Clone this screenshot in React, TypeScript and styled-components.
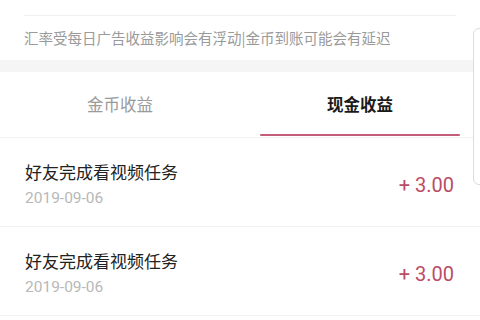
import React from 'react';
import styled, { createGlobalStyle } from 'styled-components';

const GlobalStyle = createGlobalStyle`
  html, body {
    margin: 0;
    padding: 0;
    background: #ffffff;
  }
  body {
    font-family: "Noto Sans CJK SC", "Noto Sans", sans-serif;
  }
`;

const Page = styled.div`
  position: relative;
  width: 480px;
  height: 320px;
  overflow: hidden;
  background: #ffffff;
`;

const NoticeBox = styled.div`
  margin-top: 15px;
  padding: 0 24px;
`;

const Notice = styled.div`
  border-top: 1px solid #f0f0f0;
  height: 44px;
  line-height: 44px;
  font-size: 14.5px;
  color: #9a9a9a;
  white-space: nowrap;
`;

const Band = styled.div`
  height: 12px;
  background: #f5f5f5;
`;

const Tabs = styled.div`
  display: grid;
  grid-template-columns: 1fr 1fr;
  height: 65px;
  border-bottom: 1px solid #f2f2f2;
`;

const Tab = styled.div<{ active?: boolean }>`
  position: relative;
  display: flex;
  align-items: center;
  justify-content: center;
  padding-bottom: 2px;
  font-size: 16.5px;
  font-weight: ${p => (p.active ? 700 : 400)};
  color: ${p => (p.active ? '#1a1a1a' : '#9a9a9a')};

  &::after {
    content: '';
    display: ${p => (p.active ? 'block' : 'none')};
    position: absolute;
    left: 20px;
    right: 20px;
    bottom: 1px;
    height: 2px;
    border-radius: 1px;
    background: #c45d77;
  }
`;

const Row = styled.div`
  display: flex;
  align-items: center;
  justify-content: space-between;
  height: 89px;
  padding: 4px 26px 0 25px;
  border-bottom: 1px solid #f2f2f2;
  box-sizing: border-box;
`;

const Info = styled.div`
  display: flex;
  flex-direction: column;
  gap: 4px;
`;

const Title = styled.div`
  font-size: 17px;
  line-height: 24px;
  color: #222222;
`;

const Date = styled.div`
  font-family: "Roboto", "Noto Sans", sans-serif;
  font-size: 15.5px;
  line-height: 20px;
  color: #b8b8b8;
`;

const Amount = styled.div`
  font-family: "Roboto", "Noto Sans", sans-serif;
  font-size: 20px;
  color: #bb4c66;
  margin-top: 2px;
`;

const SideCard = styled.div`
  position: absolute;
  left: 473px;
  top: 28px;
  width: 40px;
  height: 155px;
  border: 1px solid #dcdcdc;
  border-radius: 6px;
  background: #ffffff;
`;

const records = [
  { title: '好友完成看视频任务', date: '2019-09-06', amount: '+ 3.00' },
  { title: '好友完成看视频任务', date: '2019-09-06', amount: '+ 3.00' },
];

export default function App() {
  return (
    <Page>
      <GlobalStyle />
      <NoticeBox>
        <Notice>汇率受每日广告收益影响会有浮动|金币到账可能会有延迟</Notice>
      </NoticeBox>
      <Band />
      <Tabs>
        <Tab>金币收益</Tab>
        <Tab active>现金收益</Tab>
      </Tabs>
      {records.map((r, i) => (
        <Row key={i}>
          <Info>
            <Title>{r.title}</Title>
            <Date>{r.date}</Date>
          </Info>
          <Amount>{r.amount}</Amount>
        </Row>
      ))}
      <SideCard />
    </Page>
  );
}
